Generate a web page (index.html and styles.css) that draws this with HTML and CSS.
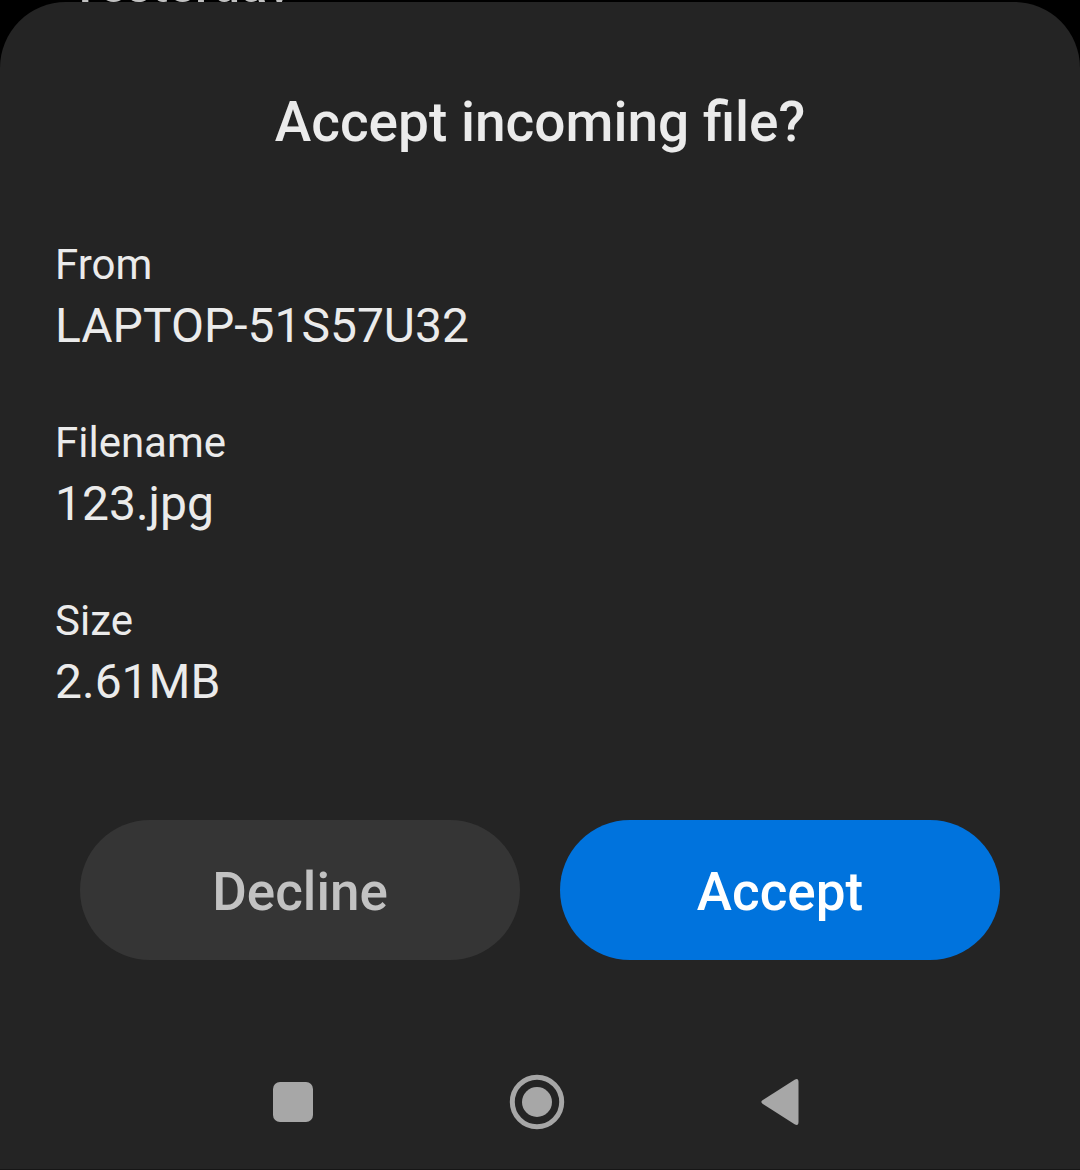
FILE: index.html
```html
<!DOCTYPE html>
<html lang="en">
<head>
<meta charset="utf-8">
<meta name="viewport" content="width=device-width, initial-scale=1">
<title>Accept incoming file?</title>
<link rel="stylesheet" href="styles.css">
</head>
<body>
<div class="backdrop"><span class="backdrop-text">Yesterday</span></div>
<main class="sheet" role="dialog" aria-labelledby="title">
  <h1 class="title" id="title">Accept incoming file?</h1>
  <dl class="details">
    <div class="detail"><dt class="label">From</dt><dd class="value">LAPTOP-51S57U32</dd></div>
    <div class="detail"><dt class="label">Filename</dt><dd class="value">123.jpg</dd></div>
    <div class="detail"><dt class="label">Size</dt><dd class="value">2.61MB</dd></div>
  </dl>
  <div class="actions">
    <button class="button" type="button">Decline</button>
    <button class="button button-primary" type="button">Accept</button>
  </div>
  <nav class="navbar" aria-label="System navigation">
    <button class="nav-button" type="button" aria-label="Recent apps">
      <svg width="56" height="56" viewBox="0 0 56 56" fill="#a7a7a7"><rect x="8" y="8" width="40" height="40" rx="7"/></svg>
    </button>
    <button class="nav-button" type="button" aria-label="Home">
      <svg width="56" height="56" viewBox="0 0 56 56" fill="#a7a7a7"><circle cx="28" cy="28" r="24.7" fill="none" stroke="#a7a7a7" stroke-width="5"/><circle cx="28" cy="28" r="15"/></svg>
    </button>
    <button class="nav-button" type="button" aria-label="Back">
      <svg width="56" height="56" viewBox="0 0 56 56" fill="#a7a7a7"><path d="M9.5 26.3 41.6 5.7Q45.5 3.7 45.5 8V48Q45.5 52.3 41.6 50.3L9.5 29.7Q7.2 28 9.5 26.3Z"/></svg>
    </button>
  </nav>
</main>
</body>
</html>
```
FILE: styles.css
```css
* {
  box-sizing: border-box;
}

body {
  margin: 0;
  min-height: 100vh;
  display: flex;
  flex-direction: column;
  background: #000;
  color: #ebebeb;
  font-family: Roboto, "Liberation Sans", sans-serif;
}

/* The page behind the sheet; only its last rows stay visible. */
.backdrop {
  height: 2px;
  padding: 0 70px;
  display: flex;
  align-items: flex-end;
  overflow: hidden;
}

.backdrop-text {
  margin-bottom: -12px;
  color: #c2c2c2;
  font-size: 50px;
  font-weight: 500;
  line-height: 58px;
}

.sheet {
  flex: 1;
  display: flex;
  flex-direction: column;
  padding-top: 87px;
  background: #242424;
  border-bottom: 1px solid #161616;
  border-radius: 66px 66px 0 0;
}

.title {
  margin: 0;
  text-align: center;
  font-size: 55px;
  font-weight: 500;
  line-height: 66px;
}

.details {
  margin: 82px 55px 0;
  display: flex;
  flex-direction: column;
  gap: 56px;
}

.label {
  font-size: 42px;
  line-height: 56px;
}

.value {
  margin: 0;
  font-size: 48px;
  line-height: 66px;
}

.actions {
  margin: 105px 80px 0;
  display: grid;
  grid-template-columns: 1fr 1fr;
  gap: 40px;
}

.button {
  height: 140px;
  padding: 4px 0 0;
  border: 0;
  border-radius: 70px;
  background: #353535;
  color: #c2c2c2;
  font: 500 53px/62px Roboto, "Liberation Sans", sans-serif;
}

.button-primary {
  background: #0073dd;
  color: #fff;
}

.navbar {
  margin-top: auto;
  padding: 0 177px 39px 171px;
  display: grid;
  grid-template-columns: repeat(3, 1fr);
  justify-items: center;
}

.nav-button {
  display: flex;
  padding: 0;
  border: 0;
  background: none;
}
```
